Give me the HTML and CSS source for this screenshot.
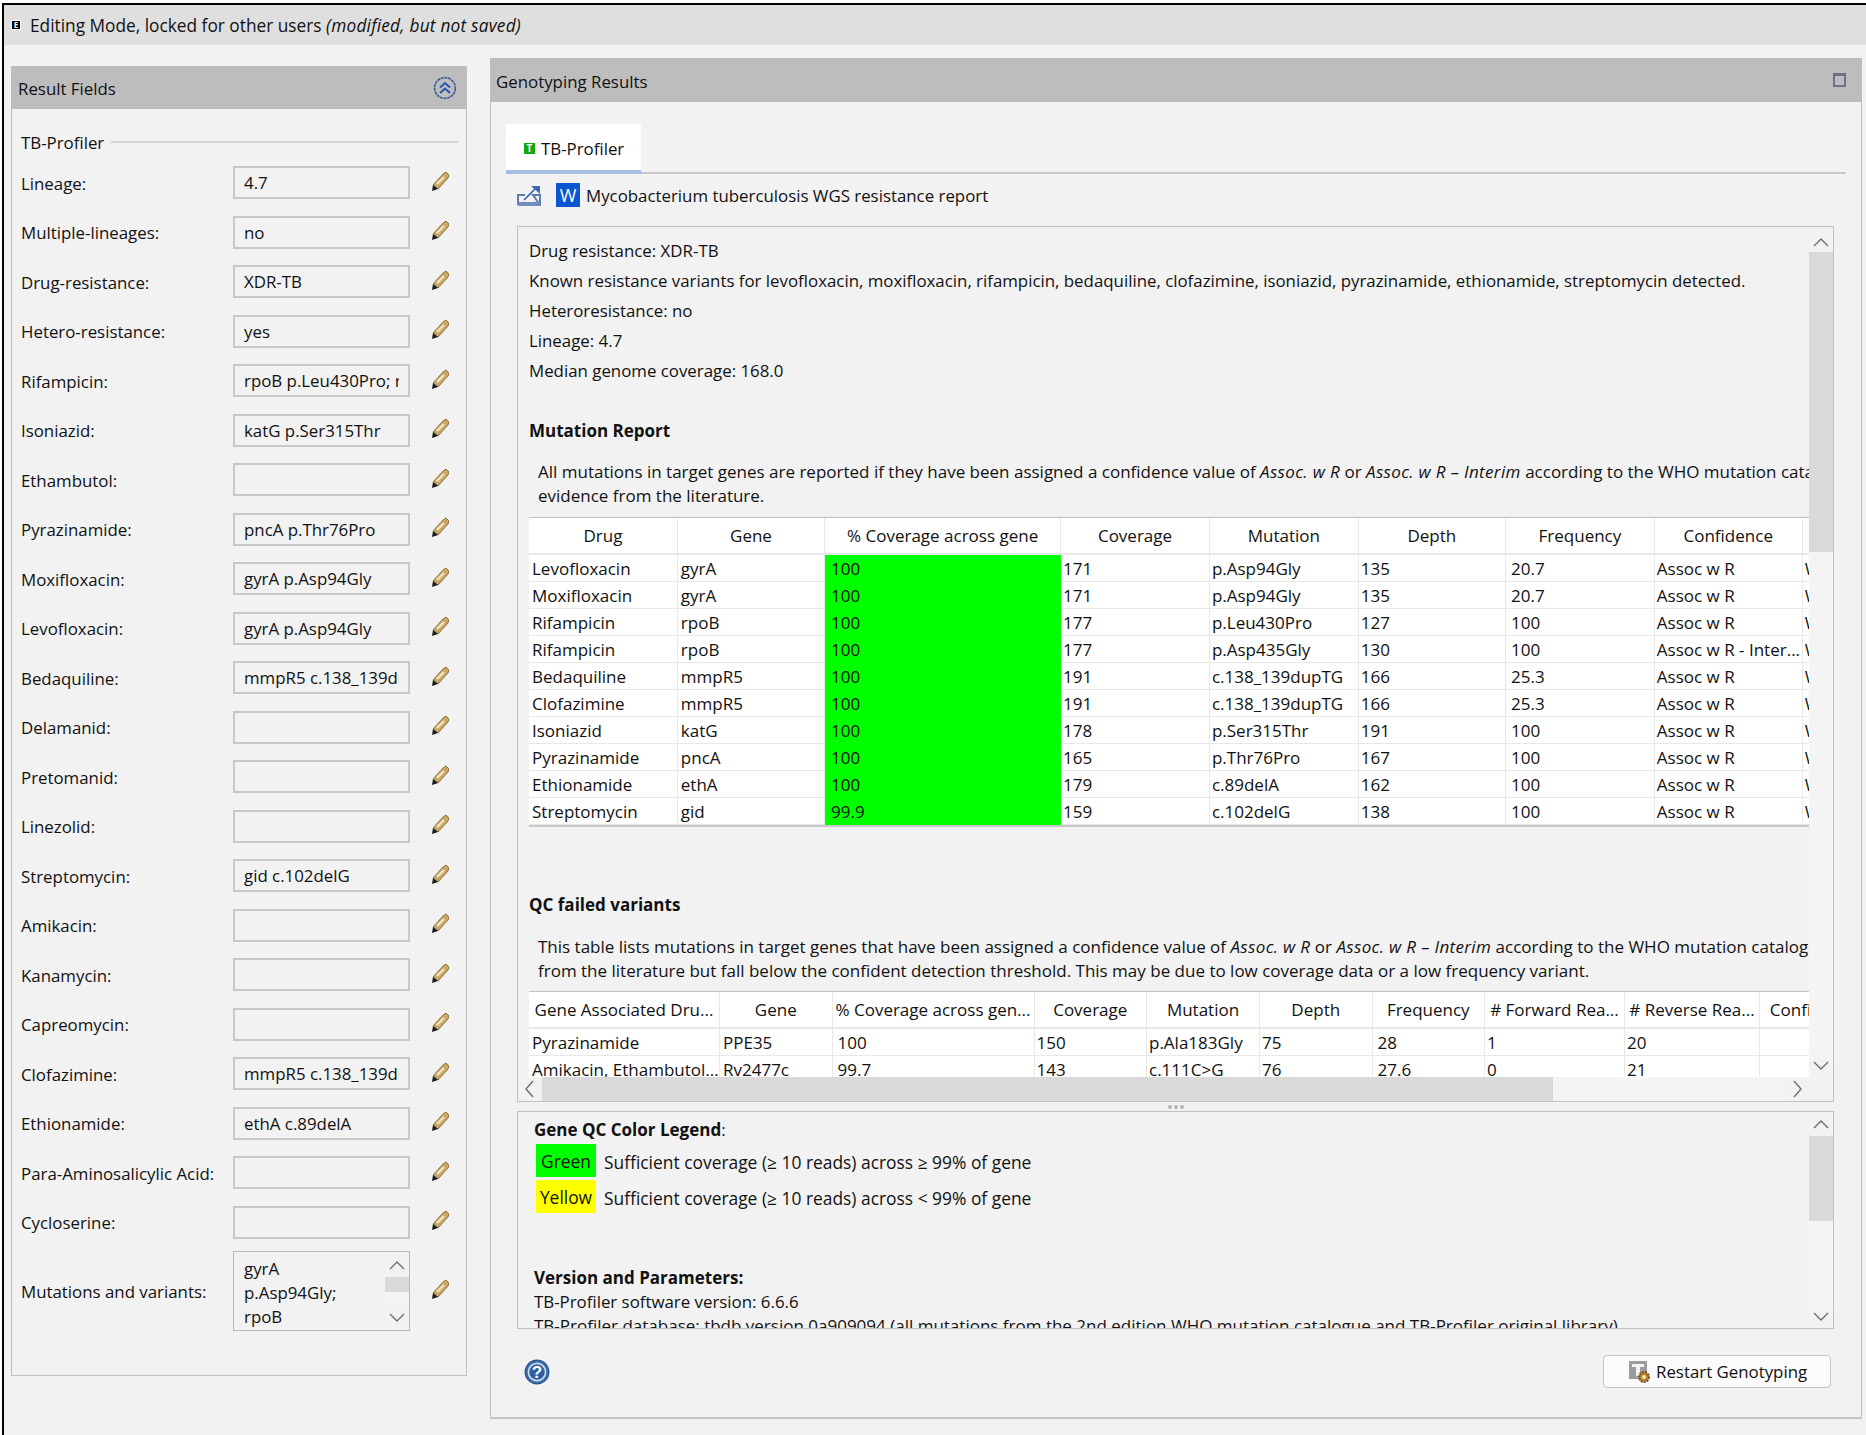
FILE: index.html
```html
<!DOCTYPE html>
<html lang="en">
<head>
<meta charset="utf-8">
<title>Genotyping Results</title>
<link rel="stylesheet" href="styles.css">
</head>
<body>
<svg class="defs" width="0" height="0">
  <symbol id="pencil" viewBox="0 0 18 20">
    <path d="M2 14 L12 3 L15 1 L18 4 L17 7 L7 18 Z" fill="#c9a865" stroke="#8f7240"/>
    <path d="M6 13 L13 6" stroke="#f0e4c0" stroke-width="2.4"/>
    <path d="M2 14 L7 18 L1 20 Z" fill="#1c1c1c"/>
  </symbol>
  <symbol id="up" viewBox="0 0 24 14"><path d="M5 11 L12 4 L19 11" fill="none" stroke="#6d6d6d" stroke-width="1.4"/></symbol>
  <symbol id="down" viewBox="0 0 24 14"><path d="M5 3 L12 10 L19 3" fill="none" stroke="#6d6d6d" stroke-width="1.4"/></symbol>
  <symbol id="left" viewBox="0 0 14 24"><path d="M10 4 L3 12 L10 20" fill="none" stroke="#6d6d6d" stroke-width="1.4"/></symbol>
  <symbol id="right" viewBox="0 0 14 24"><path d="M4 4 L11 12 L4 20" fill="none" stroke="#6d6d6d" stroke-width="1.4"/></symbol>
</svg>

<div class="frame">
  <div class="modebar">
    <span class="mode-icon">E</span>
    <span>Editing Mode, locked for other users <em>(modified, but not saved)</em></span>
  </div>

  <div class="panes">
    <section class="fields-panel">
      <div class="panel-title">
        <span>Result Fields</span>
        <svg width="24" height="24" viewBox="0 0 24 24">
          <circle cx="12" cy="12" r="10.4" fill="none" stroke="#3b5a96" stroke-width="1.6" stroke-dasharray="3 .7"/>
          <path d="M7 11.5 L12 7 L17 11.5 M7 17 L12 12.5 L17 17" fill="none" stroke="#1f55b0" stroke-width="1.8"/>
        </svg>
      </div>
      <div class="fields-body">
        <div class="group-head"><span>TB-Profiler</span><i></i></div>
        <div class="fields">
          <label>Lineage:</label><div class="value"><span>4.7</span></div><svg class="pen"><use href="#pencil"/></svg>
          <label>Multiple-lineages:</label><div class="value"><span>no</span></div><svg class="pen"><use href="#pencil"/></svg>
          <label>Drug-resistance:</label><div class="value"><span>XDR-TB</span></div><svg class="pen"><use href="#pencil"/></svg>
          <label>Hetero-resistance:</label><div class="value"><span>yes</span></div><svg class="pen"><use href="#pencil"/></svg>
          <label>Rifampicin:</label><div class="value"><span>rpoB p.Leu430Pro; rpoB p.Asp435Gly</span></div><svg class="pen"><use href="#pencil"/></svg>
          <label>Isoniazid:</label><div class="value"><span>katG p.Ser315Thr</span></div><svg class="pen"><use href="#pencil"/></svg>
          <label>Ethambutol:</label><div class="value"><span></span></div><svg class="pen"><use href="#pencil"/></svg>
          <label>Pyrazinamide:</label><div class="value"><span>pncA p.Thr76Pro</span></div><svg class="pen"><use href="#pencil"/></svg>
          <label>Moxifloxacin:</label><div class="value"><span>gyrA p.Asp94Gly</span></div><svg class="pen"><use href="#pencil"/></svg>
          <label>Levofloxacin:</label><div class="value"><span>gyrA p.Asp94Gly</span></div><svg class="pen"><use href="#pencil"/></svg>
          <label>Bedaquiline:</label><div class="value"><span>mmpR5 c.138_139dupTG</span></div><svg class="pen"><use href="#pencil"/></svg>
          <label>Delamanid:</label><div class="value"><span></span></div><svg class="pen"><use href="#pencil"/></svg>
          <label>Pretomanid:</label><div class="value"><span></span></div><svg class="pen"><use href="#pencil"/></svg>
          <label>Linezolid:</label><div class="value"><span></span></div><svg class="pen"><use href="#pencil"/></svg>
          <label>Streptomycin:</label><div class="value"><span>gid c.102delG</span></div><svg class="pen"><use href="#pencil"/></svg>
          <label>Amikacin:</label><div class="value"><span></span></div><svg class="pen"><use href="#pencil"/></svg>
          <label>Kanamycin:</label><div class="value"><span></span></div><svg class="pen"><use href="#pencil"/></svg>
          <label>Capreomycin:</label><div class="value"><span></span></div><svg class="pen"><use href="#pencil"/></svg>
          <label>Clofazimine:</label><div class="value"><span>mmpR5 c.138_139dupTG</span></div><svg class="pen"><use href="#pencil"/></svg>
          <label>Ethionamide:</label><div class="value"><span>ethA c.89delA</span></div><svg class="pen"><use href="#pencil"/></svg>
          <label>Para-Aminosalicylic Acid:</label><div class="value"><span></span></div><svg class="pen"><use href="#pencil"/></svg>
          <label>Cycloserine:</label><div class="value"><span></span></div><svg class="pen"><use href="#pencil"/></svg>
        </div>
        <div class="fields fields-last">
          <label>Mutations and variants:</label>
          <div class="value-multi">
            <div class="multi-text">gyrA<br>p.Asp94Gly;<br>rpoB</div>
            <div class="multi-scroll">
              <svg class="chev"><use href="#up"/></svg>
              <div class="multi-thumb"></div>
              <div class="track"></div>
              <svg class="chev"><use href="#down"/></svg>
            </div>
          </div>
          <svg class="pen"><use href="#pencil"/></svg>
        </div>
      </div>
    </section>

    <section class="results-panel">
      <div class="panel-title title-results">
        <span>Genotyping Results</span>
        <i class="maximize"></i>
      </div>
      <div class="results-body">
        <div class="tabs">
          <div class="tab"><span class="tab-icon">T</span>TB-Profiler</div>
        </div>
        <div class="report-head">
          <svg width="24" height="21" viewBox="0 0 24 21">
            <path d="M1 20 V10 H8 M16 10 H23 V20 Z" fill="none" stroke="#5c7cab" stroke-width="2"/>
            <path d="M1 17 H23 V21 H1 Z" fill="#6f8db8"/>
            <path d="M7 15 L19 3" stroke="#2f5fa8" stroke-width="1.6"/>
            <path d="M14 1 H23 V9 Z" fill="#3b69ad"/>
          </svg>
          <span class="word-icon">W</span>
          <span>Mycobacterium tuberculosis WGS resistance report</span>
        </div>

        <div class="report-box">
          <div class="report-text">
            <p class="line">Drug resistance: XDR-TB</p>
            <p class="line">Known resistance variants for levofloxacin, moxifloxacin, rifampicin, bedaquiline, clofazimine, isoniazid, pyrazinamide, ethionamide, streptomycin detected.</p>
            <p class="line">Heteroresistance: no</p>
            <p class="line">Lineage: 4.7</p>
            <p class="line">Median genome coverage: 168.0</p>
            <h4 class="report-h first">Mutation Report</h4>
            <p class="para">All mutations in target genes are reported if they have been assigned a confidence value of <em>Assoc. w R</em> or <em>Assoc. w R – Interim</em> according to the WHO mutation catalogue and have supporting<br>evidence from the literature.</p>
            <table class="grid grid-mutations">
              <colgroup><col class="c149"><col class="c147"><col class="c235"><col class="c149"><col class="c149"><col class="c147"><col class="c149"><col class="c148"><col class="c150"></colgroup>
              <thead><tr><th>Drug</th><th>Gene</th><th>% Coverage across gene</th><th>Coverage</th><th>Mutation</th><th>Depth</th><th>Frequency</th><th>Confidence</th><th></th></tr></thead>
              <tbody>
                <tr><td>Levofloxacin</td><td>gyrA</td><td class="ok">100</td><td>171</td><td>p.Asp94Gly</td><td>135</td><td class="num">20.7</td><td>Assoc w R</td><td>WHO</td></tr>
                <tr><td>Moxifloxacin</td><td>gyrA</td><td class="ok">100</td><td>171</td><td>p.Asp94Gly</td><td>135</td><td class="num">20.7</td><td>Assoc w R</td><td>WHO</td></tr>
                <tr><td>Rifampicin</td><td>rpoB</td><td class="ok">100</td><td>177</td><td>p.Leu430Pro</td><td>127</td><td class="num">100</td><td>Assoc w R</td><td>WHO</td></tr>
                <tr><td>Rifampicin</td><td>rpoB</td><td class="ok">100</td><td>177</td><td>p.Asp435Gly</td><td>130</td><td class="num">100</td><td>Assoc w R - Inter...</td><td>WHO</td></tr>
                <tr><td>Bedaquiline</td><td>mmpR5</td><td class="ok">100</td><td>191</td><td>c.138_139dupTG</td><td>166</td><td class="num">25.3</td><td>Assoc w R</td><td>WHO</td></tr>
                <tr><td>Clofazimine</td><td>mmpR5</td><td class="ok">100</td><td>191</td><td>c.138_139dupTG</td><td>166</td><td class="num">25.3</td><td>Assoc w R</td><td>WHO</td></tr>
                <tr><td>Isoniazid</td><td>katG</td><td class="ok">100</td><td>178</td><td>p.Ser315Thr</td><td>191</td><td class="num">100</td><td>Assoc w R</td><td>WHO</td></tr>
                <tr><td>Pyrazinamide</td><td>pncA</td><td class="ok">100</td><td>165</td><td>p.Thr76Pro</td><td>167</td><td class="num">100</td><td>Assoc w R</td><td>WHO</td></tr>
                <tr><td>Ethionamide</td><td>ethA</td><td class="ok">100</td><td>179</td><td>c.89delA</td><td>162</td><td class="num">100</td><td>Assoc w R</td><td>WHO</td></tr>
                <tr><td>Streptomycin</td><td>gid</td><td class="ok">99.9</td><td>159</td><td>c.102delG</td><td>138</td><td class="num">100</td><td>Assoc w R</td><td>WHO</td></tr>
              </tbody>
            </table>
            <h4 class="report-h second">QC failed variants</h4>
            <p class="para para-failed">This table lists mutations in target genes that have been assigned a confidence value of <em>Assoc. w R</em> or <em>Assoc. w R – Interim</em> according to the WHO mutation catalogue and have supporting evidence<br>from the literature but fall below the confident detection threshold. This may be due to low coverage data or a low frequency variant.</p>
            <table class="grid grid-failed">
              <colgroup><col class="c191"><col class="c112"><col class="c202"><col class="c112"><col class="c113"><col class="c112"><col class="c112"><col class="c140"><col class="c135"><col class="c110"></colgroup>
              <thead><tr><th>Gene Associated Dru...</th><th>Gene</th><th>% Coverage across gen...</th><th>Coverage</th><th>Mutation</th><th>Depth</th><th>Frequency</th><th># Forward Rea...</th><th># Reverse Rea...</th><th>Confidence</th></tr></thead>
              <tbody>
                <tr><td>Pyrazinamide</td><td>PPE35</td><td class="num">100</td><td>150</td><td>p.Ala183Gly</td><td>75</td><td class="num">28</td><td>1</td><td>20</td><td></td></tr>
                <tr><td>Amikacin, Ethambutol...</td><td>Rv2477c</td><td class="num">99.7</td><td>143</td><td>c.111C&gt;G</td><td>76</td><td class="num">27.6</td><td>0</td><td>21</td><td></td></tr>
              </tbody>
            </table>
          </div>
          <div class="vscroll">
            <svg class="chev"><use href="#up"/></svg>
            <div class="thumb-main"></div>
            <div class="track"></div>
            <svg class="chev"><use href="#down"/></svg>
          </div>
          <div class="hscroll">
            <svg class="chev-h"><use href="#left"/></svg>
            <div class="thumb-h"></div>
            <div class="track"></div>
            <svg class="chev-h"><use href="#right"/></svg>
          </div>
        </div>

        <div class="sash"><i></i><i></i><i></i></div>

        <div class="legend-box">
          <div class="legend-text">
            <p class="legend-head"><b>Gene QC Color Legend</b>:</p>
            <div class="legend-row"><span class="chip chip-green">Green</span><span class="legend-desc">Sufficient coverage (≥ 10 reads) across ≥ 99% of gene</span></div>
            <div class="legend-row"><span class="chip chip-yellow">Yellow</span><span class="legend-desc">Sufficient coverage (≥ 10 reads) across &lt; 99% of gene</span></div>
            <p class="legend-head version"><b>Version and Parameters:</b></p>
            <p class="legend-head">TB-Profiler software version: 6.6.6</p>
            <p class="legend-head legend-db">TB-Profiler database: tbdb version 0a909094 (all mutations from the 2nd edition WHO mutation catalogue and TB-Profiler original library)</p>
          </div>
          <div class="vscroll">
            <svg class="chev"><use href="#up"/></svg>
            <div class="thumb-legend"></div>
            <div class="track"></div>
            <svg class="chev"><use href="#down"/></svg>
          </div>
        </div>

        <div class="footer">
          <svg width="26" height="26" viewBox="0 0 26 26">
            <circle cx="13" cy="13" r="11.8" fill="#3f6da8" stroke="#22508f" stroke-width="1.2"/>
            <circle cx="13" cy="13" r="8.6" fill="#2f5f9f" stroke="#cfdcec" stroke-width="1.6"/>
            <text x="13" y="19" text-anchor="middle" class="help-mark">?</text>
          </svg>
          <button class="restart">
            <svg width="22" height="22" viewBox="0 0 22 22">
              <rect x="0" y="0" width="18" height="18" fill="#9c9c9c"/>
              <path d="M3 3 H15 V6 H11 V15 H7 V6 H3 Z" fill="#f4f4f4"/>
              <circle cx="15" cy="16" r="5" fill="#b9842f" stroke="#7a5320" stroke-width="2" stroke-dasharray="2 1"/>
              <circle cx="15" cy="16" r="2" fill="#f5e6b8"/>
            </svg>
            Restart Genotyping
          </button>
        </div>
      </div>
    </section>
  </div>
</div>
</body>
</html>
```

FILE: styles.css
```css
* {
	box-sizing: border-box;
}
html, body {
	margin: 0;
	padding: 0;
	background: #ffffff;
}
body {
	font-family: "Open Sans", "Noto Sans", sans-serif;
	font-size: 16.85px;
	color: #111111;
	overflow: hidden;
}
p, h4 {
	margin: 0;
}
.defs {
	position: absolute;
}

.frame {
	height: 1432px;
	margin: 3px 0 0 2px;
	border-top: 2px solid #000000;
	border-left: 2px solid #000000;
	background: #f2f2f2;
}
.modebar {
	height: 40px;
	background: #dfdfdf;
	display: flex;
	align-items: center;
	gap: 9px;
	padding-left: 7px;
	font-size: 17.3px;
}
.modebar em {
	letter-spacing: .2px;
}
.mode-icon {
	width: 10px;
	height: 10px;
	background: #000000;
	border: 1px solid #ffffff;
	color: #ffffff;
	font-size: 8px;
	font-weight: 700;
	line-height: 8px;
	text-align: center;
}
.panes {
	display: flex;
	align-items: flex-start;
	gap: 23px;
	padding-left: 7px;
}

.panel-title {
	height: 43px;
	background: #bdbdbd;
	display: flex;
	align-items: center;
	justify-content: space-between;
	padding: 1px 10px 0 7px;
}

/* left pane */
.fields-panel {
	width: 456px;
	margin-top: 21px;
}
.fields-body {
	height: 1267px;
	border: 1px solid #c0c0c0;
	border-top: 0;
	padding: 21px 8px 0 9px;
}
.group-head {
	height: 24px;
	display: flex;
	align-items: center;
	gap: 7px;
}
.group-head i {
	flex: 1;
	border-top: 2px solid #d2d2d2;
}
.fields {
	margin-top: 12px;
	display: grid;
	grid-template-columns: 212px 177px 18px;
	grid-auto-rows: 33px;
	column-gap: 0;
	row-gap: 16.5px;
	align-items: center;
}
.fields label {
	padding-top: 1px;
}
.fields-last {
	margin-top: 12px;
	grid-auto-rows: 80px;
}
.value {
	height: 33px;
	border: 2px solid #c8c8c8;
	padding: 0 9px;
}
.value span {
	display: block;
	height: 29px;
	line-height: 30px;
	overflow: hidden;
	white-space: nowrap;
}
.pen {
	width: 18px;
	height: 20px;
	margin: -4px 0 0 21px;
	overflow: visible;
}
.value-multi {
	height: 80px;
	border: 1px solid #b8b8b8;
	display: flex;
}
.multi-text {
	flex: 1;
	padding: 5px 0 0 10px;
	line-height: 24px;
}
.multi-scroll {
	width: 24px;
	display: flex;
	flex-direction: column;
}
.multi-thumb {
	height: 15px;
	background: #d9d9d9;
	margin-top: 5px;
}
.multi-scroll .track {
	flex: none;
	height: 15px;
}
.multi-scroll .chev:first-child {
	margin-top: 6px;
}
.multi-scroll .chev:last-child {
	margin-top: 4px;
}

/* right pane */
.results-panel {
	width: 1372px;
	margin-top: 13px;
}
.title-results {
	height: 44px;
	padding: 2px 15px 0 6px;
}
.maximize {
	width: 13px;
	height: 14px;
	border: 2px solid #6b7280;
	border-top-width: 3px;
	margin-top: -2px;
	margin-right: 1px;
}
.results-body {
	height: 1317px;
	border: 1px solid #c0c0c0;
	border-top: 0;
	border-bottom: 2px solid #c4c4c4;
	padding: 22px 15px 0 15px;
}
.tabs {
	height: 50px;
	border-bottom: 2px solid #c8c8c8;
}
.tab {
	width: 135px;
	height: 50px;
	background: #ffffff;
	border-bottom: 4px solid #a3c0e2;
	display: flex;
	align-items: center;
	gap: 6px;
	padding: 2px 0 0 18px;
}
.tab-icon {
	width: 11px;
	height: 11px;
	background: #12a80e;
	color: #ffffff;
	font-size: 10px;
	font-weight: 700;
	line-height: 11px;
	text-align: center;
}
.report-head {
	margin: 9px 0 0 11px;
	height: 24px;
	display: flex;
	align-items: center;
	gap: 15px;
}
.word-icon {
	width: 24px;
	height: 24px;
	margin-right: -9px;
	background: #0a55d0;
	color: #ffffff;
	font-size: 18px;
	line-height: 24px;
	text-align: center;
}
.report-box {
	margin: 19px 12px 0 11px;
	height: 876px;
	border: 1px solid #c0c0c0;
	display: grid;
	grid-template-columns: 1fr 24px;
	grid-template-rows: 1fr 24px;
}
.report-text {
	overflow: hidden;
	min-width: 0;
	min-height: 0;
	padding: 9px 0 0 11px;
	white-space: nowrap;
}
.line {
	line-height: 30px;
}
.report-h {
	font-size: 17px;
	font-weight: 700;
	line-height: 30px;
}
.report-h.first {
	margin-top: 30px;
}
.report-h.second {
	margin-top: 63px;
}
.para {
	margin: 14px 0 0 9px;
	font-size: 17px;
	line-height: 24px;
}
.para em {
	letter-spacing: .35px;
}
.para-failed {
	margin-top: 15px;
}

.grid {
	border-collapse: separate;
	border-spacing: 0;
	table-layout: fixed;
	background: #ffffff;
	border-top: 1px solid #c0c0c0;
	white-space: nowrap;
	font-size: 17px;
}
.grid-mutations {
	width: 1424px;
	margin-top: 9px;
	border-bottom: 2px solid #c8c8c8;
}
.grid-failed {
	width: 1339px;
	margin-top: 8px;
}
.grid th {
	height: 37px;
	font-weight: 400;
	padding: 0 2px;
	text-align: center;
	border-right: 1px solid #e8e8e8;
	border-bottom: 2px solid #e8e8e8;
	overflow: hidden;
}
.grid td {
	height: 27px;
	padding: 0 0 0 2px;
	border-right: 1px solid #e8e8e8;
	border-bottom: 1px solid #e8e8e8;
	overflow: hidden;
}
.grid td:first-child,
.grid td:nth-child(2) {
	padding-left: 3px;
}
.grid td.num {
	padding-left: 5px;
}
.grid td.ok {
	background: #00ff00;
	padding-left: 6px;
	border-bottom-color: #00ff00;
	border-right: 0;
}
.c110 { width: 110px; }
.c112 { width: 112.5px; }
.c113 { width: 113px; }
.c135 { width: 135px; }
.c140 { width: 140px; }
.c147 { width: 147px; }
.c148 { width: 147.5px; }
.c149 { width: 148.5px; }
.c150 { width: 150px; }
.c191 { width: 191px; }
.c202 { width: 202px; }
.c235 { width: 235.5px; }

.vscroll {
	display: flex;
	flex-direction: column;
	min-height: 0;
}
.chev {
	width: 24px;
	height: 14px;
	flex: none;
}
.vscroll .chev:first-child {
	margin: 8px 0 3px;
}
.vscroll .chev:last-child {
	margin: 0 0 4px;
}
.legend-box .vscroll .chev:first-child {
	margin: 5px 0 5px;
}
.track {
	flex: 1;
	background: #f4f4f4;
}
.thumb-main {
	height: 300px;
	background: #d9d9d9;
}
.thumb-legend {
	height: 85px;
	background: #d9d9d9;
}
.hscroll {
	display: flex;
	align-items: stretch;
	min-width: 0;
}
.chev-h {
	width: 24px;
	height: 24px;
	flex: none;
	padding: 0 5px;
}
.thumb-h {
	width: 1011px;
	background: #d9d9d9;
}
.sash {
	margin: 0 12px 0 11px;
	height: 9px;
	display: flex;
	justify-content: center;
	align-items: center;
	gap: 2px;
}
.sash i {
	width: 4px;
	height: 4px;
	border-radius: 50%;
	background: #b5b5b5;
}
.legend-box {
	margin: 0 12px 0 11px;
	height: 218px;
	border: 1px solid #c0c0c0;
	display: grid;
	grid-template-columns: 1fr 24px;
}
.legend-text {
	overflow: hidden;
	min-width: 0;
	padding: 6px 0 0 16px;
	white-space: nowrap;
}
.legend-head {
	line-height: 24px;
}
.legend-head b {
	font-size: 17px;
}
.legend-head.version {
	margin-top: 53px;
}
.legend-db {
	font-size: 17px;
}
.legend-row {
	display: flex;
	align-items: center;
	gap: 8px;
	height: 33px;
	margin: 2px 0 3px 2px;
	font-size: 17.4px;
}
.legend-desc {
	padding-top: 2px;
}
.chip {
	width: 60px;
	height: 33px;
	line-height: 35px;
	text-align: center;
}
.chip-green {
	background: #00ff00;
}
.chip-yellow {
	background: #ffff00;
}
.footer {
	margin: 26px 15px 0 18px;
	display: flex;
	justify-content: space-between;
	align-items: center;
}
.help-mark {
	font-family: "Liberation Sans", sans-serif;
	font-size: 17px;
	font-weight: 700;
	fill: #ffffff;
}
.restart {
	width: 228px;
	height: 33px;
	border: 1px solid #c4c4c4;
	border-radius: 4px;
	background: #fbfbfb;
	font: inherit;
	color: inherit;
	display: flex;
	align-items: center;
	gap: 5px;
	padding: 0 0 0 25px;
}
```
